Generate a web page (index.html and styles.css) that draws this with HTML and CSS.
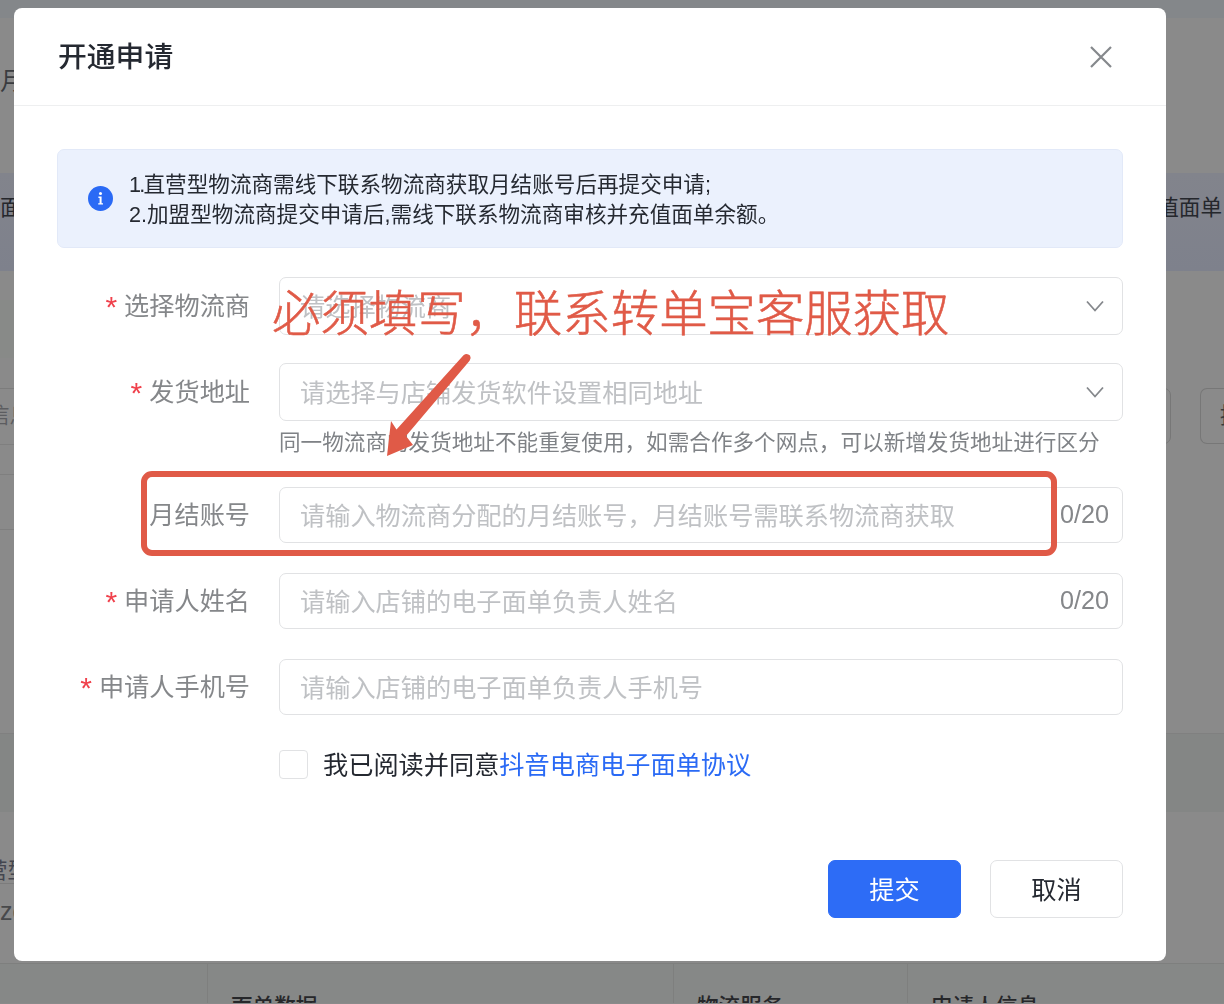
FILE: index.html
```html
<!DOCTYPE html>
<html lang="zh-CN">
<head>
<meta charset="utf-8">
<title>开通申请</title>
<link rel="stylesheet" href="styles.css">
</head>
<body>
<div class="page" aria-hidden="true">
  <div class="bg-top"></div>
  <div class="bg-head"><span class="bg-head-text">月结账号</span></div>
  <div class="bg-band"><span>面单</span><span>充值面单</span></div>
  <div class="bg-gap"><div class="bg-tab"></div></div>
  <div class="bg-filter">
    <div class="bg-filter-left"><span class="bg-filter-a">信息</span></div>
    <div class="bg-filter-right"><div class="bg-box"></div><div class="bg-btn">提交</div></div>
  </div>
  <div class="bg-list"></div>
  <div class="bg-strip"></div>
  <div class="bg-row-a"></div>
  <div class="bg-row-b"><span>营型</span></div>
  <div class="bg-row-c"><span>zo</span></div>
  <div class="bg-table">
    <div class="bg-cell"></div>
    <div class="bg-cell">面单数据</div>
    <div class="bg-cell">物流服务</div>
    <div class="bg-cell">申请人信息</div>
  </div>
</div>

<div class="modal" role="dialog">
  <header class="modal-head">
    <h1 class="modal-title">开通申请</h1>
    <svg class="close" viewBox="0 0 22 22" width="22" height="22"><path d="M1 1 21 21M21 1 1 21"/></svg>
  </header>
  <div class="modal-body">
    <div class="alert">
      <svg class="alert-icon" viewBox="0 0 25 25" width="25" height="25"><circle cx="12.5" cy="12.5" r="12.5"/><circle class="dot" cx="12.5" cy="7.6" r="1.5"/><path class="stem" d="M10.4 10.6h3.2v6.6h1.4v1.4h-4.8v-1.4h1.4v-5.2h-1.2z"/></svg>
      <div class="alert-text">
        <p><span class="num-one">1.</span>直营型物流商需线下联系物流商获取月结账号后再提交申请;</p>
        <p>2.加盟型物流商提交申请后,需线下联系物流商审核并充值面单余额。</p>
      </div>
    </div>
    <div class="form">
      <div class="row">
        <div class="label"><i>*</i>选择物流商</div>
        <div class="field">
          <div class="control select"><span class="ph">请选择物流商</span><svg class="chev" viewBox="0 0 18 12" width="18" height="12"><path d="M1 1.5 9 10.5 17 1.5"/></svg></div>
        </div>
      </div>
      <div class="row">
        <div class="label"><i>*</i>发货地址</div>
        <div class="field">
          <div class="control select"><span class="ph">请选择与店铺发货软件设置相同地址</span><svg class="chev" viewBox="0 0 18 12" width="18" height="12"><path d="M1 1.5 9 10.5 17 1.5"/></svg></div>
          <div class="hint">同一物流商的发货地址不能重复使用，如需合作多个网点，可以新增发货地址进行区分</div>
        </div>
      </div>
      <div class="row row-short">
        <div class="label">月结账号</div>
        <div class="field">
          <div class="control input"><span class="ph">请输入物流商分配的月结账号，月结账号需联系物流商获取</span><span class="count">0/20</span></div>
        </div>
      </div>
      <div class="row row-short row-next">
        <div class="label"><i>*</i>申请人姓名</div>
        <div class="field">
          <div class="control input"><span class="ph">请输入店铺的电子面单负责人姓名</span><span class="count">0/20</span></div>
        </div>
      </div>
      <div class="row row-short row-next">
        <div class="label"><i>*</i>申请人手机号</div>
        <div class="field">
          <div class="control input"><span class="ph">请输入店铺的电子面单负责人手机号</span></div>
        </div>
      </div>
      <div class="agree">
        <span class="checkbox"></span>
        <span class="agree-text">我已阅读并同意<a class="link">抖音电商电子面单协议</a></span>
      </div>
    </div>
  </div>
  <footer class="modal-foot">
    <button class="btn btn-primary" type="button"><span class="btn-text">提交</span></button>
    <button class="btn" type="button"><span class="btn-text">取消</span></button>
  </footer>
</div>

<div class="note-text">必须填写，联系转单宝客服获取</div>
<div class="note-box"></div>
<svg class="note-arrow" viewBox="0 0 1224 1004" width="1224" height="1004"><path d="M463.5 355.2Q467 352.8 470 355.6 471.5 358 469.6 360.8L406 436 413 445 387 456 391 421 396.5 429.5Z"/></svg>
</body>
</html>
```

FILE: styles.css
```css
* { box-sizing: border-box; }
html, body { margin: 0; padding: 0; height: 1004px; overflow: hidden; }
body {
  background: #8a8a8a;
  font-family: "Liberation Sans", "Noto Sans CJK SC", sans-serif;
  color: #252931;
}
p, h1 { margin: 0; }

/* dimmed page behind the dialog */
.page { height: 1004px; overflow: hidden; color: #2c2d30; font-size: 21.6px; }
.bg-top { height: 18px; background: #84878a; }
.bg-head { height: 155px; padding-top: 47px; font-size: 25px; line-height: 32px; color: #3a3c40; }
.bg-head-text { display: block; }
.bg-band {
  height: 98px; padding: 21px 2px 0 0; display: flex; justify-content: space-between;
  background: linear-gradient(#82848c, #7e818c); line-height: 28px; color: #25272c;
}
.bg-gap { height: 117px; padding-top: 29px; }
.bg-tab { width: 14px; height: 58px; background: #888a88; }
.bg-filter { height: 56px; display: flex; justify-content: space-between; }
.bg-filter-left { width: 600px; border-top: 1px solid #7c7c7c; }
.bg-filter-a { display: block; margin-left: -12px; width: 60px; line-height: 54px; color: #5c5d60; font-size: 21.6px; }
.bg-filter-right { display: flex; gap: 29px; }
.bg-box { width: 60px; height: 56px; border: 1px solid #777; border-radius: 7px; }
.bg-btn { width: 24px; height: 56px; padding-left: 19px; border: 1px solid #777; border-right: 0; border-radius: 7px 0 0 7px; line-height: 54px; white-space: nowrap; overflow: hidden; font-size: 21.6px; color: #3a3b3e; }
.bg-list {
  width: 600px; height: 289px; border-top: 1px solid #7f7f7f;
  background:
    linear-gradient(#7f7f7f, #7f7f7f) left 29px / 100% 1px no-repeat,
    linear-gradient(#7f7f7f, #7f7f7f) left 84px / 100% 1px no-repeat;
}
.bg-strip { height: 79px; background: #848685; border-top: 1px solid #808080; }
.bg-row-a { height: 44px; }
.bg-row-b { width: 600px; height: 28px; border-bottom: 1px solid #7c7c7c; }
.bg-row-b span { display: block; margin-left: -14px; line-height: 30px; color: #44464f; font-size: 21.6px; white-space: nowrap; }
.bg-row-c { height: 79px; }
.bg-row-c span { display: block; line-height: 54px; font-size: 25px; color: #48494b; }
.bg-table {
  height: 40px; display: grid; grid-template-columns: 208px 466px 234px 1fr;
  background: #868887; border-top: 1px solid #7e7f7e; overflow: hidden;
}
.bg-cell { padding: 28px 0 0 23px; border-right: 1px solid #7e7f7e; font-weight: 500; color: #26272a; line-height: 30px; white-space: nowrap; }
.bg-cell:last-child { border-right: 0; }

/* dialog */
.modal {
  position: fixed; left: 14px; top: 8px; width: 1152px; height: 953px;
  background: #fff; border-radius: 8px; display: flex; flex-direction: column; overflow: hidden;
}
.modal-head {
  height: 98px; flex: none; padding: 0 54px 0 44px; display: flex; align-items: center; justify-content: space-between;
  border-bottom: 1px solid #eeeff0;
}
.modal-title { font-size: 28.8px; font-weight: 500; line-height: 40px; color: #252931; margin-top: 1px; }
.close { margin-top: 1px; }
.close path { fill: none; stroke: #85888c; stroke-width: 2.2; }
.modal-body { flex: 1; padding: 43px 43px 0; }
.alert {
  height: 99px; display: flex; align-items: center; gap: 16px; padding-left: 30px;
  background: #ebf1fd; border: 1px solid #e2e9f8; border-radius: 7px;
}
.alert-icon { flex: none; }
.alert-icon circle { fill: #2a6af5; }
.alert-icon .dot, .alert-icon .stem { fill: #fff; }
.alert-text { font-size: 21.6px; line-height: 30px; color: #252931; margin-top: 2px; }
.num-one { letter-spacing: -1.75px; }

.form { margin-top: 29px; display: flex; flex-direction: column; gap: 28px; }
.row { display: flex; gap: 29px; align-items: flex-start; }
.row-next { margin-top: 2px; }
.label {
  width: 193px; flex: none; text-align: right; font-size: 25.2px; line-height: 58px; color: #85878a; white-space: nowrap;
}
.row-short .label { line-height: 56px; }
.label i { font-style: normal; color: #f0414c; margin-right: 7px; font-size: 30px; line-height: 1; vertical-align: -2px; }
.field { flex: 1; min-width: 0; }
.control {
  display: flex; align-items: center; justify-content: space-between;
  padding: 0 13px 0 20px; border: 1px solid #e1e2e4; border-radius: 7px; font-size: 25.2px;
}
.select { height: 58px; padding-right: 18px; }
.input { height: 56px; }
.ph { color: #bfc1c4; margin-bottom: 2px; }
.select .ph { margin-bottom: 3px; }
.count { color: #85878a; margin-bottom: 2px; }
.chev path { fill: none; stroke: #85888c; stroke-width: 1.8; }
.hint { margin-top: 5px; margin-bottom: -1px; font-size: 21.6px; line-height: 34px; color: #7f8286; white-space: nowrap; }

.agree { margin: 7px 0 0 222px; display: flex; align-items: center; gap: 15px; height: 29px; }
.checkbox { width: 29px; height: 29px; border: 1px solid #e1e2e4; border-radius: 4px; }
.agree-text { font-size: 25.2px; line-height: 29px; color: #252931; margin-top: 2px; }
.link { color: #2a6af5; }

.modal-foot { flex: none; display: flex; justify-content: flex-end; gap: 29px; padding: 0 43px 43px; }
.btn {
  width: 133px; height: 58px; padding: 0 0 3px; border: 1px solid #e1e2e4; border-radius: 7px; background: #fff;
  font: inherit; font-size: 25.2px; color: #252931;
}
.btn-primary { background: #2d6cf6; border-color: #2d6cf6; color: #fff; }

/* hand-drawn annotations over the screenshot */
.note-text {
  position: fixed; left: 272px; top: 276px; font-size: 48.4px; line-height: 68px; color: #e05a47; white-space: nowrap;
  font-family: "Noto Sans CJK SC", sans-serif; font-weight: 300; -webkit-text-stroke: 0.6px #e05a47;
}
.note-box { position: fixed; left: 141px; top: 471px; width: 916px; height: 85px; border: 6px solid #e05a47; border-radius: 11px; }
.note-arrow { position: fixed; left: 0; top: 0; pointer-events: none; }
.note-arrow path { fill: #e05a47; }
```
